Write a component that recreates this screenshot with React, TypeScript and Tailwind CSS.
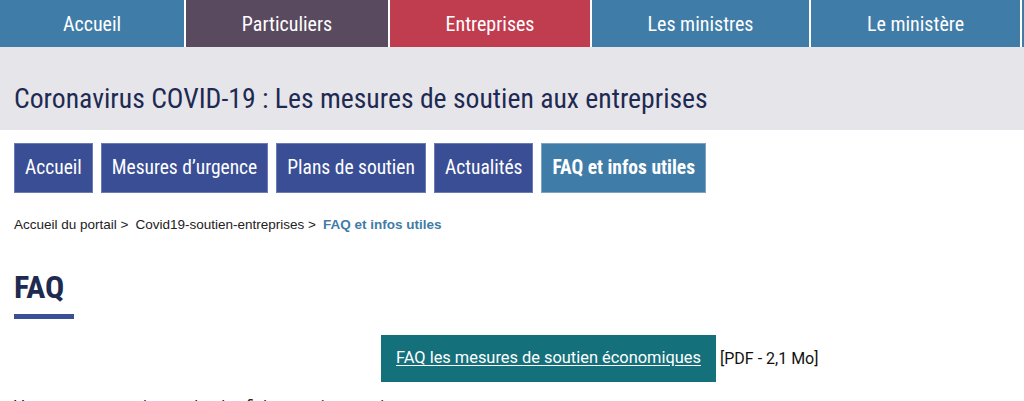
const roboto = "font-['Roboto',sans-serif]";
const cond = "[font-stretch:condensed]";

const topNav = [
  { label: "Accueil", cls: "w-[184px] bg-[#3f7ca8]" },
  { label: "Particuliers", cls: "w-[202px] bg-[#5a4a5f]" },
  { label: "Entreprises", cls: "w-[200px] bg-[#c03c4f]" },
  { label: "Les ministres", cls: "w-[217px] bg-[#3f7ca8]" },
  { label: "Le ministère", cls: "w-[209px] bg-[#3f7ca8]" },
];

const subNav = [
  { label: "Accueil", active: false },
  { label: "Mesures d’urgence", active: false },
  { label: "Plans de soutien", active: false },
  { label: "Actualités", active: false },
  { label: "FAQ et infos utiles", active: true },
];

export default function App() {
  return (
    <div className={`w-full h-[401px] overflow-hidden bg-white ${roboto}`}>
      {/* barre principale */}
      <nav className="flex h-[47px] gap-[2px] bg-white">
        {topNav.map((item) => (
          <a
            key={item.label}
            className={`${item.cls} flex items-center justify-center text-white text-[20px] ${cond}`}
          >
            {item.label}
          </a>
        ))}
        <div className="flex-1 bg-[#3f7ca8]" />
      </nav>

      <header className="h-[83px] bg-[#e6e5ea] px-[14px] pt-[36px]">
        <h1 className={`text-[27.7px] leading-[32px] text-[#1e2a52] ${cond}`}>
          Coronavirus COVID-19 : Les mesures de soutien aux entreprises
        </h1>
      </header>

      <main className="px-[14px]">
        <div className="mt-[13px] flex gap-2">
          {subNav.map((item) => (
            <a
              key={item.label}
              className={`flex h-[50px] items-center px-[10px] text-[19.5px] text-white border border-[#6b7bb5] ${cond} ${
                item.active
                  ? "bg-[#3f7ca8] border-[#7aa3c4] font-bold"
                  : "bg-[#3a4e95]"
              }`}
            >
              {item.label}
            </a>
          ))}
        </div>

        <div className="mt-[24px] flex gap-[7px] font-['Liberation_Sans',Arial,sans-serif] text-[13.5px] leading-[15px] text-[#222]">
          <span>Accueil du portail &gt;</span>
          <span>Covid19-soutien-entreprises &gt;</span>
          <span className="font-bold text-[#3f7ca8]">FAQ et infos utiles</span>
        </div>

        <h2 className={`mt-[36px] text-[32px] leading-[38px] font-bold text-[#1f2a50] ${cond}`}>
          FAQ
        </h2>
        <div className="mt-[8px] h-[5px] w-[60px] bg-[#3a4f96]" />

        <div className="mt-[16px] flex items-center pl-[367px]">
          <a className="flex h-[47px] w-[335px] items-center bg-[#14707b] pl-[15px] text-[16.4px] text-white underline underline-offset-2">
            FAQ les mesures de soutien économiques
          </a>
          <span className="ml-[4px] text-[16px] text-[#111]">[PDF - 2,1 Mo]</span>
        </div>

        <p className="mt-[13px] text-[16px] leading-[24px] text-[#222]">
          Vous pouvez aussi consulter les fiches pratiques suivantes :
        </p>
      </main>
    </div>
  );
}
